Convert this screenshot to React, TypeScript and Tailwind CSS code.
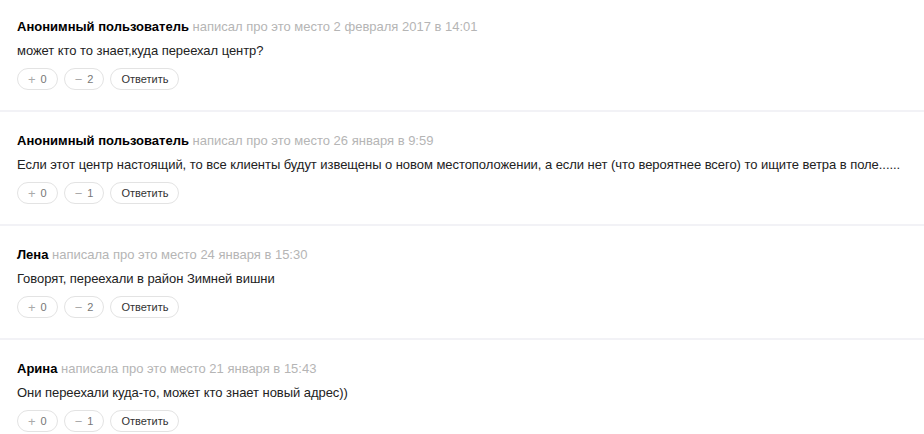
import React from 'react';

type Review = {
  author: string;
  verb: string;
  date: string;
  text: string;
  plus: number;
  minus: number;
};

const reviews: Review[] = [
  { author: 'Анонимный пользователь', verb: 'написал', date: '2 февраля 2017 в 14:01', text: 'может кто то знает,куда переехал центр?', plus: 0, minus: 2 },
  { author: 'Анонимный пользователь', verb: 'написал', date: '26 января в 9:59', text: 'Если этот центр настоящий, то все клиенты будут извещены о новом местоположении, а если нет (что вероятнее всего) то ищите ветра в поле......', plus: 0, minus: 1 },
  { author: 'Лена', verb: 'написала', date: '24 января в 15:30', text: 'Говорят, переехали в район Зимней вишни', plus: 0, minus: 2 },
  { author: 'Арина', verb: 'написала', date: '21 января в 15:43', text: 'Они переехали куда-то, может кто знает новый адрес))', plus: 0, minus: 1 },
];

function Pill({ children }: { children: React.ReactNode }) {
  return (
    <button className="h-[22px] px-[10px] rounded-full border border-[#e3e3e3] bg-white text-[11px] text-[#333] leading-none flex items-center gap-[5px]">
      {children}
    </button>
  );
}

export default function App() {
  return (
    <div className="w-[924px] h-[434px] overflow-hidden bg-white font-['Liberation_Sans',Arial,sans-serif]">
      {reviews.map((r, i) => (
        <div key={i} className={i === 0 ? '' : 'border-t-2 border-[#f2f2f6]'}>
          <div className={`pl-[17px] ${i === 0 ? 'pt-[18px]' : 'pt-[20px]'} pb-[20px]`}>
            <div className="text-[13px] leading-[18px]">
              <span className="font-bold text-black">{r.author}</span>{' '}
              <span className="text-[#b5b5b5]">{r.verb} про это место {r.date}</span>
            </div>
            <div className="mt-[6px] text-[13px] leading-[18px] text-[#222] whitespace-nowrap tracking-[-0.05px]">{r.text}</div>
            <div className="mt-[8px] flex gap-[6px]">
              <Pill>
                <span className="text-[#aaa] text-[13px]">+</span>
                <span className="text-[#777]">{r.plus}</span>
              </Pill>
              <Pill>
                <span className="text-[#aaa] text-[13px]">−</span>
                <span className="text-[#777]">{r.minus}</span>
              </Pill>
              <Pill>Ответить</Pill>
            </div>
          </div>
        </div>
      ))}
    </div>
  );
}
